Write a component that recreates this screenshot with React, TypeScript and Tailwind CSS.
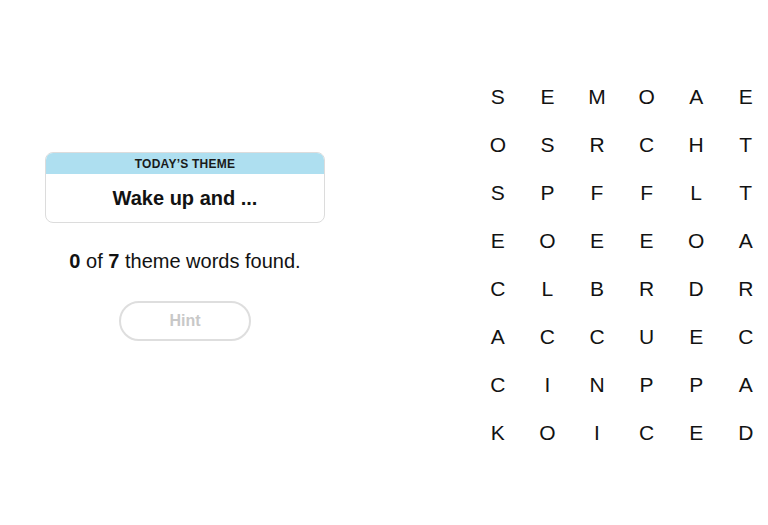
import React from 'react';

const grid = [
  'SEMOAE',
  'OSRCHT',
  'SPFFLT',
  'EOEEOA',
  'CLBRDR',
  'ACCUEC',
  'CINPPA',
  'KOICED',
];

export default function App() {
  return (
    <div className="w-[768px] h-[525px] bg-white flex overflow-hidden font-['Liberation_Sans',Arial,sans-serif] text-[#121212]">
      {/* left panel */}
      <div className="w-[370px] shrink-0 flex flex-col items-center pt-[152px]">
        <div className="w-[280px] h-[71px] rounded-lg border border-[#dcdcdc] overflow-hidden flex flex-col">
          <div className="h-[21px] bg-[#aedff0] flex items-center justify-center text-[12px] font-bold tracking-[0.02em] text-[#1a1a1a]">
            TODAY&rsquo;S THEME
          </div>
          <div className="flex-1 flex items-center justify-center text-[20px] font-bold">
            Wake up and ...
          </div>
        </div>
        <p className="mt-[26px] text-[20px] leading-[24px]">
          <span className="font-bold">0</span> of <span className="font-bold">7</span> theme words found.
        </p>
        <button className="mt-[28px] w-[132px] h-[40px] rounded-full border-2 border-[#dedede] text-[16px] font-bold text-[#c8c8c8]">
          Hint
        </button>
      </div>

      {/* letter board */}
      <div className="shrink-0 pt-[72px] pl-[103px]">
        <div className="grid grid-cols-[repeat(6,49.6px)] auto-rows-[48px]">
          {grid.flatMap((row, r) =>
            row.split('').map((ch, c) => (
              <div key={`${r}-${c}`} className="flex items-center justify-center text-[21px] leading-none">
                {ch}
              </div>
            ))
          )}
        </div>
      </div>
    </div>
  );
}
